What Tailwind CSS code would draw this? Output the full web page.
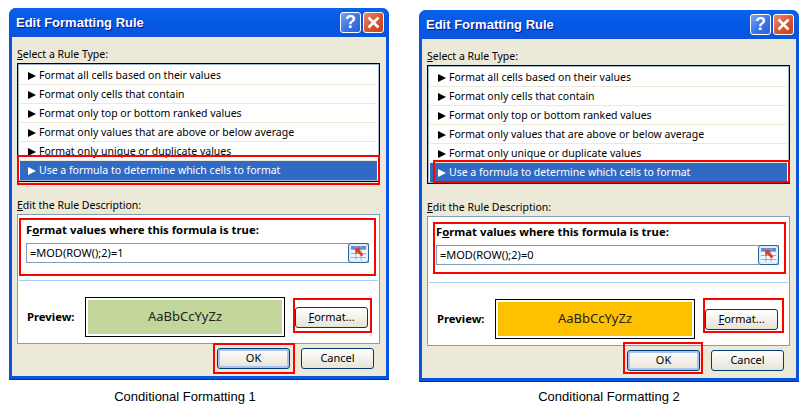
<!DOCTYPE html>
<html lang="en">
<head>
<meta charset="UTF-8">
<title>Conditional Formatting</title>
<script src="https://cdn.jsdelivr.net/npm/@tailwindcss/browser@4"></script>
</head>
<body class="bg-white w-[808px] h-[411px] overflow-hidden font-['Noto_Sans',sans-serif] text-[10.5px] text-black">
<div class="flex items-start pl-[9px] gap-[30px]">

  <!-- left -->
  <figure class="w-[380px] mt-[8px]">
    <div class="relative h-[372px] flex flex-col rounded-t-[7px] bg-[#0855dd] px-[3px] pb-[3px] border-b border-[#00309c]">
      <div class="h-[29px] shrink-0 flex items-center -mx-[3px] pl-[7px] pr-[5px] rounded-t-[7px] bg-gradient-to-b from-[#0a62ea] via-[#0458e6] to-[#0a55dc]">
        <span class="flex-1 pt-px font-['Liberation_Sans',sans-serif] font-bold text-[13px] text-white [text-shadow:1px_1px_#0f1089]">Edit Formatting Rule</span>
        <span class="w-[21px] h-[21px] mr-[2px] flex items-center justify-center rounded-[3px] border border-white bg-gradient-to-br from-[#7ba4f2] via-[#3f76e6] to-[#2a5fd8] font-['Liberation_Sans',sans-serif] text-white font-bold text-[18px]">?</span>
        <span class="w-[21px] h-[21px] flex items-center justify-center rounded-[3px] border border-white bg-gradient-to-br from-[#e88a6c] via-[#d9572f] to-[#c8401c]">
          <svg width="13" height="13" viewBox="0 0 13 13"><path d="M1.5 1.5 L11.5 11.5 M11.5 1.5 L1.5 11.5" stroke="#fff" stroke-width="2.6"/></svg>
        </span>
      </div>
      <div class="flex-1 bg-[#ece9d8] pl-[5px] pr-[6px] flex flex-col">
        <p class="h-[14px] mt-[10px] leading-[14px]"><u>S</u>elect a Rule Type:</p>
        <ul class="mt-[2px] h-[119px] overflow-hidden border border-black shadow-[inset_0_0_0_1px_#9fb6cc] bg-white p-[2px] flex flex-col">
          <li class="h-[19px] shrink-0 flex items-center gap-[3px] pl-[8px] pt-px border-b border-[#ece9d8]"><span class="w-0 h-0 border-y-[4px] border-y-transparent border-l-[8px] border-l-black"></span>Format all cells based on their values</li>
          <li class="h-[19px] shrink-0 flex items-center gap-[3px] pl-[8px] pt-px border-b border-[#ece9d8]"><span class="w-0 h-0 border-y-[4px] border-y-transparent border-l-[8px] border-l-black"></span>Format only cells that contain</li>
          <li class="h-[19px] shrink-0 flex items-center gap-[3px] pl-[8px] pt-px border-b border-[#ece9d8]"><span class="w-0 h-0 border-y-[4px] border-y-transparent border-l-[8px] border-l-black"></span>Format only top or bottom ranked values</li>
          <li class="h-[19px] shrink-0 flex items-center gap-[3px] pl-[8px] pt-px border-b border-[#ece9d8]"><span class="w-0 h-0 border-y-[4px] border-y-transparent border-l-[8px] border-l-black"></span>Format only values that are above or below average</li>
          <li class="h-[19px] shrink-0 flex items-center gap-[3px] pl-[8px] pt-px border-b border-[#ece9d8]"><span class="w-0 h-0 border-y-[4px] border-y-transparent border-l-[8px] border-l-black"></span>Format only unique or duplicate values</li>
          <li class="h-[19px] shrink-0 flex items-center gap-[3px] pl-[8px] pt-px bg-[#316ac5] text-white"><span class="w-0 h-0 border-y-[4px] border-y-transparent border-l-[8px] border-l-white"></span>Use a formula to determine which cells to format</li>
        </ul>
        <p class="h-[14px] mt-[16px] leading-[14px]"><u>E</u>dit the Rule Description:</p>
        <section class="mt-[2px] h-[130px] border border-[#7f9db9] bg-white pl-[8px] pr-[10px] flex flex-col">
          <p class="mt-[7px] h-[16px] leading-[16px] font-bold text-[11.3px]">F<u>o</u>rmat values where this formula is true:</p>
          <div class="mt-[5px] h-[20px] border border-[#7f9db9] flex items-center pl-[3px] justify-between text-[11px]">=MOD(ROW();2)=1
            <span class="w-[21px] h-[20px] -mr-px rounded-[3px] border border-[#2a6496] bg-[#e3ecf8] flex items-center justify-center">
              <svg width="15" height="14" viewBox="0 0 15 14"><rect width="15" height="14" fill="#f4f7fc"/><rect width="15" height="3" fill="#5b8bd0"/><path d="M0 3.5H15M0 7.5H15M0 11.5H15M5 0V14M10 0V14" stroke="#8fb0de"/><path d="M4 2 L10 2.5 L8.6 4.6 L12.5 8.5 L10.5 10.5 L6.6 6.6 L4.5 8Z" fill="#d8402a"/></svg>
            </span>
          </div>
          <div class="mt-[17px] -ml-[7px] -mr-[9px] h-px bg-[#a9cdf3]"></div>
          <div class="mt-[16px] flex items-center">
            <span class="w-[59px] pl-px font-bold text-[11.3px]">Preview:</span>
            <div class="w-[200px] h-[40px] border border-black p-[2px]"><div class="h-full bg-[#c3d69b] flex items-center justify-center text-[13px] text-[#222]">AaBbCcYyZz</div></div>
            <button class="ml-[10px] w-[73px] h-[21px] rounded-[3px] border border-[#003c74] bg-gradient-to-b from-white to-[#e6e3d6] text-[11px]"><u>F</u>ormat...</button>
          </div>
        </section>
        <div class="mt-[4px] flex justify-end gap-[11px] pr-[6px] text-[11px]">
          <button class="w-[73px] h-[21px] rounded-[3px] border border-[#003c74] bg-gradient-to-b from-white to-[#e6e3d6] shadow-[inset_0_0_0_2px_#a8c4ee]">OK</button>
          <button class="w-[73px] h-[21px] rounded-[3px] border border-[#003c74] bg-gradient-to-b from-white to-[#e6e3d6]">Cancel</button>
        </div>
      </div>
      <div class="absolute left-[8px] top-[147px] w-[363px] h-[30px] border-[2px] border-[#f00]"></div>
      <div class="absolute left-[10px] top-[210px] w-[357px] h-[58px] border-[2px] border-[#f00]"></div>
      <div class="absolute left-[284px] top-[290px] w-[79px] h-[35px] border-[2px] border-[#f00]"></div>
      <div class="absolute left-[204px] top-[335px] w-[82px] h-[31px] border-[2px] border-[#f00]"></div>
    </div>
    <figcaption class="mt-[7px] pr-[28px] text-center font-['Liberation_Sans',sans-serif] text-[13px]">Conditional Formatting 1</figcaption>
  </figure>

  <!-- right -->
  <figure class="w-[380px] mt-[10px]">
    <div class="relative h-[372px] flex flex-col rounded-t-[7px] bg-[#0855dd] px-[3px] pb-[3px] border-b border-[#00309c]">
      <div class="h-[29px] shrink-0 flex items-center -mx-[3px] pl-[7px] pr-[5px] rounded-t-[7px] bg-gradient-to-b from-[#0a62ea] via-[#0458e6] to-[#0a55dc]">
        <span class="flex-1 pt-px font-['Liberation_Sans',sans-serif] font-bold text-[13px] text-white [text-shadow:1px_1px_#0f1089]">Edit Formatting Rule</span>
        <span class="w-[21px] h-[21px] mr-[2px] flex items-center justify-center rounded-[3px] border border-white bg-gradient-to-br from-[#7ba4f2] via-[#3f76e6] to-[#2a5fd8] font-['Liberation_Sans',sans-serif] text-white font-bold text-[18px]">?</span>
        <span class="w-[21px] h-[21px] flex items-center justify-center rounded-[3px] border border-white bg-gradient-to-br from-[#e88a6c] via-[#d9572f] to-[#c8401c]">
          <svg width="13" height="13" viewBox="0 0 13 13"><path d="M1.5 1.5 L11.5 11.5 M11.5 1.5 L1.5 11.5" stroke="#fff" stroke-width="2.6"/></svg>
        </span>
      </div>
      <div class="flex-1 bg-[#ece9d8] pl-[5px] pr-[6px] flex flex-col">
        <p class="h-[14px] mt-[10px] leading-[14px]"><u>S</u>elect a Rule Type:</p>
        <ul class="mt-[2px] h-[119px] overflow-hidden border border-black shadow-[inset_0_0_0_1px_#9fb6cc] bg-white p-[2px] flex flex-col">
          <li class="h-[19px] shrink-0 flex items-center gap-[3px] pl-[8px] pt-px border-b border-[#ece9d8]"><span class="w-0 h-0 border-y-[4px] border-y-transparent border-l-[8px] border-l-black"></span>Format all cells based on their values</li>
          <li class="h-[19px] shrink-0 flex items-center gap-[3px] pl-[8px] pt-px border-b border-[#ece9d8]"><span class="w-0 h-0 border-y-[4px] border-y-transparent border-l-[8px] border-l-black"></span>Format only cells that contain</li>
          <li class="h-[19px] shrink-0 flex items-center gap-[3px] pl-[8px] pt-px border-b border-[#ece9d8]"><span class="w-0 h-0 border-y-[4px] border-y-transparent border-l-[8px] border-l-black"></span>Format only top or bottom ranked values</li>
          <li class="h-[19px] shrink-0 flex items-center gap-[3px] pl-[8px] pt-px border-b border-[#ece9d8]"><span class="w-0 h-0 border-y-[4px] border-y-transparent border-l-[8px] border-l-black"></span>Format only values that are above or below average</li>
          <li class="h-[19px] shrink-0 flex items-center gap-[3px] pl-[8px] pt-px border-b border-[#ece9d8]"><span class="w-0 h-0 border-y-[4px] border-y-transparent border-l-[8px] border-l-black"></span>Format only unique or duplicate values</li>
          <li class="h-[19px] shrink-0 flex items-center gap-[3px] pl-[8px] pt-px bg-[#316ac5] text-white"><span class="w-0 h-0 border-y-[4px] border-y-transparent border-l-[8px] border-l-white"></span>Use a formula to determine which cells to format</li>
        </ul>
        <p class="h-[14px] mt-[16px] leading-[14px]"><u>E</u>dit the Rule Description:</p>
        <section class="mt-[2px] h-[130px] border border-[#7f9db9] bg-white pl-[8px] pr-[10px] flex flex-col">
          <p class="mt-[7px] h-[16px] leading-[16px] font-bold text-[11.3px]">F<u>o</u>rmat values where this formula is true:</p>
          <div class="mt-[5px] h-[20px] border border-[#7f9db9] flex items-center pl-[3px] justify-between text-[11px]">=MOD(ROW();2)=0
            <span class="w-[21px] h-[20px] -mr-px rounded-[3px] border border-[#2a6496] bg-[#e3ecf8] flex items-center justify-center">
              <svg width="15" height="14" viewBox="0 0 15 14"><rect width="15" height="14" fill="#f4f7fc"/><rect width="15" height="3" fill="#5b8bd0"/><path d="M0 3.5H15M0 7.5H15M0 11.5H15M5 0V14M10 0V14" stroke="#8fb0de"/><path d="M4 2 L10 2.5 L8.6 4.6 L12.5 8.5 L10.5 10.5 L6.6 6.6 L4.5 8Z" fill="#d8402a"/></svg>
            </span>
          </div>
          <div class="mt-[17px] -ml-[7px] -mr-[9px] h-px bg-[#a9cdf3]"></div>
          <div class="mt-[16px] flex items-center">
            <span class="w-[59px] pl-px font-bold text-[11.3px]">Preview:</span>
            <div class="w-[200px] h-[40px] border border-black p-[2px]"><div class="h-full bg-[#ffc000] flex items-center justify-center text-[13px] text-[#222]">AaBbCcYyZz</div></div>
            <button class="ml-[10px] w-[73px] h-[21px] rounded-[3px] border border-[#003c74] bg-gradient-to-b from-white to-[#e6e3d6] text-[11px]"><u>F</u>ormat...</button>
          </div>
        </section>
        <div class="mt-[4px] flex justify-end gap-[11px] pr-[6px] text-[11px]">
          <button class="w-[73px] h-[21px] rounded-[3px] border border-[#003c74] bg-gradient-to-b from-white to-[#e6e3d6] shadow-[inset_0_0_0_2px_#a8c4ee]">OK</button>
          <button class="w-[73px] h-[21px] rounded-[3px] border border-[#003c74] bg-gradient-to-b from-white to-[#e6e3d6]">Cancel</button>
        </div>
      </div>
      <div class="absolute left-[14px] top-[150px] w-[357px] h-[23px] border-[2px] border-[#f00]"></div>
      <div class="absolute left-[14px] top-[212px] w-[353px] h-[52px] border-[2px] border-[#f00]"></div>
      <div class="absolute left-[284px] top-[288px] w-[81px] h-[35px] border-[2px] border-[#f00]"></div>
      <div class="absolute left-[204px] top-[332px] w-[80px] h-[32px] border-[2px] border-[#f00]"></div>
    </div>
    <figcaption class="mt-[5px] text-center font-['Liberation_Sans',sans-serif] text-[13px]">Conditional Formatting 2</figcaption>
  </figure>
</div>
</body>
</html>
